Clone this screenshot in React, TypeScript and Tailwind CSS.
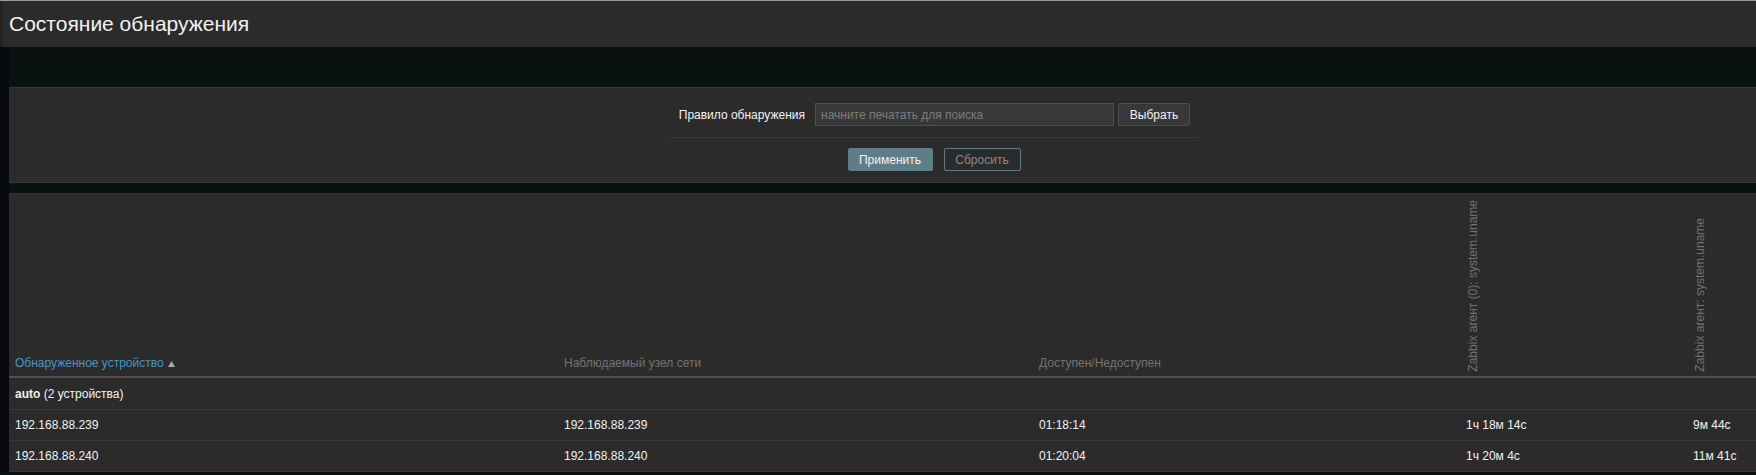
import React from "react";

const rows = [
  { ip: "192.168.88.239", host: "192.168.88.239", uptime: "01:18:14", a: "1ч 18м 14с", b: "9м 44с" },
  { ip: "192.168.88.240", host: "192.168.88.240", uptime: "01:20:04", a: "1ч 20м 4с", b: "11м 41с" },
];

const grid = "grid grid-cols-[549px_475px_427px_227px_1fr]";

function SortArrow() {
  return (
    <svg width="7" height="6" viewBox="0 0 7 6" className="ml-[4px] inline-block">
      <path d="M3.5 0 L7 6 L0 6 Z" fill="#a8a8a8" />
    </svg>
  );
}

export default function App() {
  return (
    <div className="h-[475px] w-full overflow-hidden bg-[#0a1211] font-['Liberation_Sans',Arial,sans-serif] text-[12px] text-[#f2f2f2]">
      <div className="h-px bg-[#9a9a9a]" />
      <header className="flex h-[46px] bg-[#2b2b2b]">
        <div className="w-[3px] bg-[#242424]" />
        <h1 className="flex items-center pl-[6px] text-[21px] font-normal text-[#f2f2f2]">
          Состояние обнаружения
        </h1>
      </header>

      <div className="flex">
        <div className="w-[9px] shrink-0 bg-[#08080f]" />
        <main className="min-w-0 flex-1">
          <div className="h-[40px]" />

          {/* filter */}
          <div className="h-[96px] border-y border-[#383838] bg-[#2b2b2b] pl-[660px] pt-[15px]">
            <div className="w-[530px]">
              <div className="flex h-[23px] items-center pr-[9px]">
                <span className="mr-[10px] flex-1 whitespace-nowrap text-right text-[#f2f2f2]">
                  Правило обнаружения
                </span>
                <input
                  readOnly
                  placeholder="начните печатать для поиска"
                  className="h-[23px] w-[299px] border border-[#4f4f4f] bg-[#383838] px-[5px] text-[12px] text-[#f2f2f2] outline-none placeholder:text-[#7d7d7d]"
                />
                <button className="ml-[4px] h-[23px] w-[72px] rounded-[2px] border border-[#4f4f4f] bg-[#383838] text-[12px] text-[#f2f2f2]">
                  Выбрать
                </button>
              </div>
              <div className="mt-[11px] h-px bg-[#383838]" />
              <div className="mt-[10px] flex justify-center gap-[11px]">
                <button className="h-[23px] w-[85px] rounded-[2px] border border-[#5f7d88] bg-[#5f7d88] text-[12px] text-[#f2f2f2]">
                  Применить
                </button>
                <button className="h-[23px] w-[77px] rounded-[2px] border border-[#5f7d88] bg-transparent text-[12px] text-[#8a8a8a]">
                  Сбросить
                </button>
              </div>
            </div>
          </div>

          <div className="h-[10px]" />

          {/* table */}
          <div className="border-t border-[#333333] bg-[#2b2b2b]">
            <div className={`${grid} h-[184px] border-b-2 border-[#4f4f4f]`}>
              <div className="self-end pl-[6px] pr-[5px] pb-[4px] text-[#4796c4]">
                Обнаруженное устройство
                <SortArrow />
              </div>
              <div className="self-end pl-[6px] pr-[5px] pb-[4px] text-[#737373]">Наблюдаемый узел сети</div>
              <div className="self-end pl-[6px] pr-[5px] pb-[4px] text-[#737373]">Доступен/Недоступен</div>
              <div className="flex items-end self-stretch pl-[6px] pr-[5px] pb-[4px] text-[#737373]">
                <span className="block rotate-180 leading-[14px] [writing-mode:vertical-rl]">
                  Zabbix агент (0): system.uname
                </span>
              </div>
              <div className="flex items-end self-stretch pl-[6px] pr-[5px] pb-[4px] text-[#737373]">
                <span className="block rotate-180 leading-[14px] [writing-mode:vertical-rl]">
                  Zabbix агент: system.uname
                </span>
              </div>
            </div>

            <div className="flex h-[32px] items-center border-b border-[#383838] pl-[6px]">
              <span className="font-bold">auto</span>
              <span>&nbsp;(2 устройства)</span>
            </div>

            {rows.map((r) => (
              <div key={r.ip} className={`${grid} h-[31px] items-center border-b border-[#383838]`}>
                <div className="pl-[6px]">{r.ip}</div>
                <div className="pl-[6px]">{r.host}</div>
                <div className="pl-[6px]">{r.uptime}</div>
                <div className="pl-[6px]">{r.a}</div>
                <div className="pl-[6px]">{r.b}</div>
              </div>
            ))}
          </div>
        </main>
      </div>
    </div>
  );
}
